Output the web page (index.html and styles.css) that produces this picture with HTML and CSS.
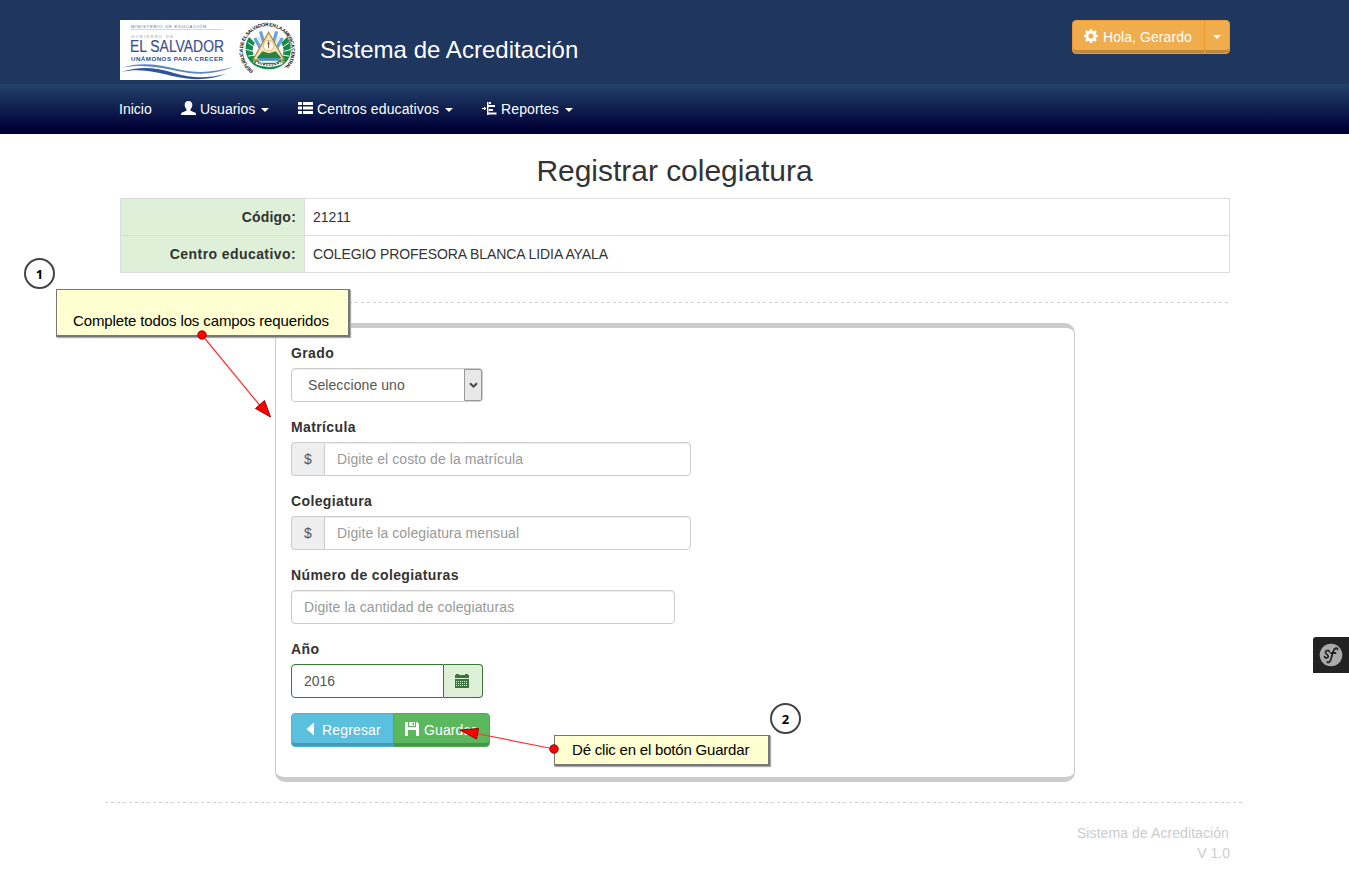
FILE: index.html
```html
<!DOCTYPE html>
<html lang="es">
<head>
<meta charset="utf-8">
<title>Registrar colegiatura</title>
<link rel="stylesheet" href="styles.css">
</head>
<body>
<header class="top">
  <div class="container top-row">
    <svg class="logo" width="180" height="60" viewBox="0 0 180 60">
      <defs>
        <path id="ring" d="M133.500 50.600A24.300 24.300 0 1 1 157 52.800"/>
      </defs>
      <rect width="180" height="60" fill="#fff"/>
      <text x="11" y="8" font-size="4.200" fill="#5c6f9c" textLength="75">MINISTERIO DE EDUCACIÓN</text>
      <path d="M11 9.500H103" stroke="#b9c4d8" stroke-width=".7"/>
      <text x="11" y="17.600" font-size="4" fill="#999" textLength="42">GOBIERNO DE</text>
      <text x="10" y="32.300" font-size="16" fill="#3c5290" stroke="#3c5290" stroke-width=".2" textLength="94" lengthAdjust="spacingAndGlyphs">EL SALVADOR</text>
      <text x="11" y="41" font-size="6.200" font-weight="bold" fill="#2c5299" textLength="92">UNÁMONOS PARA CRECER</text>
      <path d="M1 48C20 42 36 44 57 49S94 52 113 47C94 55 76 55 57 51S20 44 1 48Z" fill="#5b87bd"/>
      <path d="M1 52C20 46 34 47 54 53S88 58 106 54C88 61 70 60 52 56S20 48 1 52Z" fill="#30549b"/>
      <g transform="translate(7.500 -1)scale(.95)">
        <path d="M128 19C121 29 124 44 136 50C145 54 153 54 161 50C173 44 175 29 168 19L162 25C167 35 163 42 156 46H141C133 42 129 35 134 25Z" fill="#168b49"/>
        <path d="M127 25L133 29M125 32L132 34M127 39L134 38M132 46L137 41M170 25L164 29M172 32L165 34M170 39L163 38M165 46L160 41" stroke="#fff" stroke-width="1"/>
        <path d="M134 20L144 38M163 20L153 38M140 13L146 34M157 13L151 34" stroke="#6fa3d8" stroke-width="3.500"/>
        <path d="M137 18L145 34M160 18L152 34" stroke="#d5e4f2" stroke-width="1.500"/>
        <path d="M148.500 14L165 43H132Z" fill="#f5e5c0" stroke="#b8832f" stroke-width="1.300"/>
        <circle cx="148.500" cy="28" r="5.500" fill="#fff" stroke="#dcb95d"/>
        <path d="M148.500 23v8" stroke="#826037"/><path d="M147 25h3l-1.500 3z" fill="#d82d2d"/>
        <path d="M136 41L142 34L149 36L156 34L162 41Z" fill="#28853f"/>
        <path d="M136 41H162L158 44H140Z" fill="#4b91ce"/>
        <path d="M135 46Q149 52 163 46" fill="none" stroke="#fff" stroke-width="3"/>
        <path d="M137 46Q149 51 161 46" fill="none" stroke="#3a414a" stroke-width="1.200" stroke-dasharray="2 1"/>
      </g>
      <text class="seal-text" fill="#222"><textPath href="#ring">REPUBLICA DE EL SALVADOR EN LA AMERICA CENTRAL</textPath></text>
    </svg>
    <span class="brand">Sistema de Acreditación</span>
    <div class="btn-group user-menu">
      <button class="btn warning"><svg class="icon" viewBox="0 0 14 14"><path fill="currentColor" fill-rule="evenodd" d="M5.900 0h2.200l.4 1.900 1 .4 1.700-1.100 1.600 1.600-1.100 1.700.4 1 1.900.4v2.200l-1.900.4-.4 1 1.100 1.700-1.600 1.600-1.700-1.100-1 .4L8.100 14H5.900l-.4-1.900-1-.4-1.700 1.100-1.600-1.600 1.100-1.700-.4-1L0 8.100V5.900l1.900-.4.4-1-1.100-1.700 1.600-1.600 1.700 1.100 1-.4zM7 4.400a2.600 2.600 0 1 0 0 5.200 2.600 2.600 0 0 0 0-5.200z"/></svg><span class="hello">Hola, Gerardo</span></button>
      <button class="btn warning toggle" aria-label="Menú"><i class="caret"></i></button>
    </div>
  </div>
</header>
<nav class="nav">
  <div class="container nav-row">
    <a class="nav-item home">Inicio</a>
    <a class="nav-item users"><svg class="icon wide" viewBox="0 0 15 14"><path fill="currentColor" d="M7.500 0C9.900 0 11.300 1.400 11.300 3.700c0 2-.8 3.400-1.700 4.300v1.800l4.300 1.600c.7.300 1.100.8 1.100 1.600v1H0v-1c0-.8.400-1.300 1.100-1.600l4.300-1.600V8C4.500 7.100 3.700 5.700 3.700 3.700 3.700 1.400 5.100 0 7.500 0z"/></svg><span>Usuarios</span><i class="caret"></i></a>
    <a class="nav-item centers"><svg class="icon wide" viewBox="0 0 15 14"><path fill="currentColor" d="M0 1h4v3H0zM5 1h10v3H5zM0 5.500h4v3H0zM5 5.500h10v3H5zM0 10h4v3H0zM5 10h10v3H5z"/></svg><span class="nav-centers">Centros educativos</span><i class="caret"></i></a>
    <a class="nav-item reports"><svg class="icon wide" viewBox="0 0 15 14"><path fill="currentColor" d="M5 1h1.500v13H5zM7 1h2v2H7zM6 4h7v2H6zM7 8h4v2H7zM6 11.500h8.500v2H6zM0 7h2V5.500L4.500 7.500 2 9.500V8H0z"/></svg><span class="nav-reports">Reportes</span><i class="caret"></i></a>
  </div>
</nav>
<main class="container main">
  <h2 class="title">Registrar colegiatura</h2>
  <table class="info">
    <tr><th><span class="t-code">Código:</span></th><td>21211</td></tr>
    <tr><th><span class="t-center">Centro educativo:</span></th><td><span class="school">COLEGIO PROFESORA BLANCA LIDIA AYALA</span></td></tr>
  </table>
  <hr class="dashed">
  <section class="panel">
    <div class="field"><label>Grado</label>
      <div class="control select"><span class="value">Seleccione uno</span><span class="arrow"><svg width="9" height="7" viewBox="0 0 9 7"><path d="M1 1.200L4.500 4.700L8 1.200" fill="none" stroke="#444" stroke-width="2"/></svg></span></div>
    </div>
    <div class="field"><label>Matrícula</label>
      <div class="group"><span class="addon">$</span><input class="control joined" placeholder="Digite el costo de la matrícula"></div>
    </div>
    <div class="field"><label>Colegiatura</label>
      <div class="group"><span class="addon">$</span><input class="control joined" placeholder="Digite la colegiatura mensual"></div>
    </div>
    <div class="field"><label>Número de colegiaturas</label>
      <input class="control count" placeholder="Digite la cantidad de colegiaturas">
    </div>
    <div class="field"><label>Año</label>
      <div class="group year"><input class="control year-input" value="2016"><span class="addon date"><svg width="14" height="14" viewBox="0 0 14 14"><path fill="currentColor" d="M0 1h1V0h3v1h6V0h3v1h1v3H0zM0 5h14v9H0z"/><path d="M1 7.500h12M1 9.500h12M1 11.500h12" stroke="#dff0d8" stroke-width="1" stroke-dasharray="1 1"/></svg></span></div>
    </div>
    <div class="btn-group">
      <button class="btn back"><svg class="icon back-icon" viewBox="0 0 14 14"><path fill="currentColor" d="M11 .5v13L3.500 7z"/></svg><span class="back-text">Regresar</span></button>
      <button class="btn save"><svg class="icon" viewBox="0 0 14 14"><path fill="currentColor" fill-rule="evenodd" d="M0 0h3v5h8V0h1l2 2v12h-3V8H3v6H0zM4 0h6v4H4zm3.500.7v2.600H9V.7z"/></svg><span class="save-text">Guardar</span></button>
    </div>
  </section>
</main>
<footer class="footer">
  <div class="foot-text"><span class="foot-name">Sistema de Acreditación</span><br><span class="foot-version">V 1.0</span></div>
</footer>
<div class="symfony"><svg width="24" height="24" viewBox="0 0 24 24"><circle cx="12" cy="12" r="11.300" fill="#aaa"/><path d="M10.300 8.700c.2-1.900-4-1.600-3.800.8.200 1.800 3 2 2.700 3.900-.2 1.900-3.500 2.100-3.700.3" fill="none" stroke="#222" stroke-width="1.700" stroke-linecap="round"/><path d="M18.500 6.500c.2-2.200-3-2-4.300 2l-2.300 7.800c-.8 2.700-2.400 3.700-3.600 2.700M12 10h4.500" fill="none" stroke="#222" stroke-width="1.800" stroke-linecap="round"/></svg></div>
<div class="note note-fields"><span>Complete todos los campos requeridos</span></div>
<div class="note note-save"><span>Dé clic en el botón Guardar</span></div>
<div class="step step-one">1</div>
<div class="step step-two">2</div>
<svg class="arrows" width="1349" height="883" viewBox="0 0 1349 883">
  <g stroke="#f33" stroke-width="1.200"><path d="M202 335L262 408"/><path d="M554 749L474 733"/></g>
  <g fill="red" stroke="#900" stroke-width="1"><path d="M270.500 417L255.500 408.500L264.500 400.500Z"/><path d="M460 730L478.500 728.500L476.500 739Z"/><circle cx="202" cy="335" r="4.200"/><circle cx="554" cy="749" r="4.200"/></g>
</svg>
</body>
</html>
```

FILE: styles.css
```css
* { box-sizing: border-box; }
body { margin: 0; position: relative; height: 883px; overflow: hidden; background: #fff; color: #333; font: 14px/20px "Liberation Sans", Arial, sans-serif; }
.container { width: 1110px; margin-left: 120px; }
.top { height: 84px; background: #1f365f; }
.top-row { display: flex; align-items: flex-start; padding-top: 20px; }
.logo { display: block; }
.seal-text { font-size: 5px; font-weight: bold; letter-spacing: -.48px; }
.brand { margin: 15px 0 0 20px; color: #fff; font-size: 24px; line-height: 30px; letter-spacing: .04px; }
.user-menu { margin-left: auto; }
.btn-group { display: flex; }
.btn { display: flex; align-items: center; justify-content: flex-start; height: 34px; padding: 0 11px; border: 1px solid; color: #fff; font: inherit; box-shadow: inset 0 -3px rgba(0,0,0,.2); white-space: nowrap; }
.btn:first-child { border-radius: 4px 0 0 4px; }
.btn:last-child { border-radius: 0 4px 4px 0; margin-left: -1px; }
.btn .icon { margin-right: 5px; margin-top: -2px; }
.hello { letter-spacing: .07px; }
.warning { width: 133px; background: #f0ad4e; border-color: #f0982c; }
.toggle { width: 26px; padding: 0; justify-content: center; }
.icon { width: 14px; height: 14px; flex: none; }
.wide { width: 15px; }
.caret { border: 4px solid transparent; border-top-color: currentColor; border-bottom: 0; }
.nav { height: 50px; background: linear-gradient(#22426a, #000036 90%, #000033); }
.nav-row { display: flex; height: 50px; align-items: center; }
.nav-item { display: flex; align-items: center; color: #fff; white-space: nowrap; }
.nav-item .icon { margin-right: 4px; margin-top: -2px; }
.nav-item .caret { margin-left: auto; margin-top: 1px; }
.nav-centers { letter-spacing: .12px; }
.nav-reports { letter-spacing: .12px; }
.home { width: 62px; margin-left: -1px; }
.users { width: 88px; margin-right: 29px; }
.centers { width: 155px; margin-right: 29px; }
.reports { width: 91px; }
.main { padding-top: 20px; }
.title { margin: 0 0 11px; font-size: 30px; line-height: 34px; height: 33px; font-weight: normal; text-align: center; letter-spacing: -.03px; padding-right: 1px; }
.info { width: 1110px; height: 75px; border-collapse: collapse; table-layout: fixed; }
.info th, .info td { height: 37px; padding: 0 8px; border: 1px solid #ddd; }
.info th { width: 184px; background: #dff0d8; text-align: right; }
.t-code { letter-spacing: .2px; }
.t-center { letter-spacing: .42px; }
.school { letter-spacing: -.09px; }
.dashed { height: 1px; margin: 29px 0 20px; border: 0; background: repeating-linear-gradient(90deg, #ccc 0 3px, transparent 3px 6px) 1px 0; }
.panel { width: 800px; height: 459px; margin-left: 155px; padding: 15px; border: 1px solid #ccc; border-width: 5px 1px; border-radius: 10px; }
.field { margin-bottom: 15px; }
.field label { display: block; margin-bottom: 5px; font-weight: bold; letter-spacing: .38px; }
.control { height: 34px; padding: 0 12px; border: 1px solid #ccc; border-radius: 4px; background: #fff; color: #555; font: inherit; box-shadow: inset 0 1px 1px rgba(0,0,0,.075); outline: 0; }
.control::placeholder { color: #999; opacity: 1; letter-spacing: .08px; }
.select { display: flex; width: 192px; align-items: center; padding: 0 0 0 16px; }
.value { letter-spacing: .08px; }
.arrow { display: flex; align-items: center; justify-content: center; width: 18px; height: 32px; margin-left: auto; border: 1px solid #999; border-radius: 0 2px 2px 0; background: #e8e8e8; }
.group { display: flex; width: 400px; }
.addon { width: 33px; height: 34px; border: 1px solid #ccc; border-right: 0; border-radius: 4px 0 0 4px; background: #eee; color: #555; line-height: 32px; text-align: center; }
.joined { width: 367px; flex: 1; border-radius: 0 4px 4px 0; }
.count { display: block; width: 384px; }
.count::placeholder { letter-spacing: .12px; }
.year { width: 192px; }
.year-input { width: 153px; border-color: #3c763d; border-radius: 4px 0 0 4px; }
.date { display: flex; align-items: center; justify-content: center; width: 39px; padding-right: 2px; border: 1px solid #3c763d; border-left: 0; border-radius: 0 4px 4px 0; background: #dff0d8; color: #3c763d; }
.back { width: 103px; background: #5bc0de; border-color: #46b8da; }
.btn .back-icon { margin-right: 5px; }
.back-text { letter-spacing: .16px; }
.save { width: 97px; background: #5cb85c; border-color: #4cae4c; }
.save-text { letter-spacing: .1px; }
.footer { width: 1137px; margin: 20px 0 0 105px; background: repeating-linear-gradient(90deg, #ccc 0 3px, transparent 3px 6px) top / 100% 1px no-repeat; }
.foot-text { padding: 21px 12px 0 0; color: #ccc; text-align: right; }
.foot-name { margin-right: 1px; letter-spacing: .08px; }
.symfony { position: absolute; right: 0; top: 637px; display: flex; align-items: center; justify-content: center; width: 36px; height: 36px; background: #222; border-radius: 3px 0 0; }
.note { position: absolute; border: 1px solid #777; border-right-width: 2px; border-bottom-width: 2px; background: #ffffd2; box-shadow: 1px 1px 1px #aaa; color: #000; font-size: 15px; white-space: nowrap; }
.note-fields { left: 56px; top: 289px; width: 294px; height: 48px; padding: 21px 0 0 16px; letter-spacing: -.12px; }
.note-save { left: 554px; top: 735px; width: 216px; height: 31px; padding: 4px 0 0 17px; letter-spacing: -.2px; }
.step { position: absolute; width: 31px; height: 31px; border: 2px solid #444; border-radius: 50%; background: #fff; color: #000; font: bold 13px/28px "Noto Sans", sans-serif; text-align: center; }
.step-one { left: 24px; top: 258px; }
.step-two { left: 770px; top: 703px; }
.arrows { position: absolute; left: 0; top: 0; pointer-events: none; }
```
